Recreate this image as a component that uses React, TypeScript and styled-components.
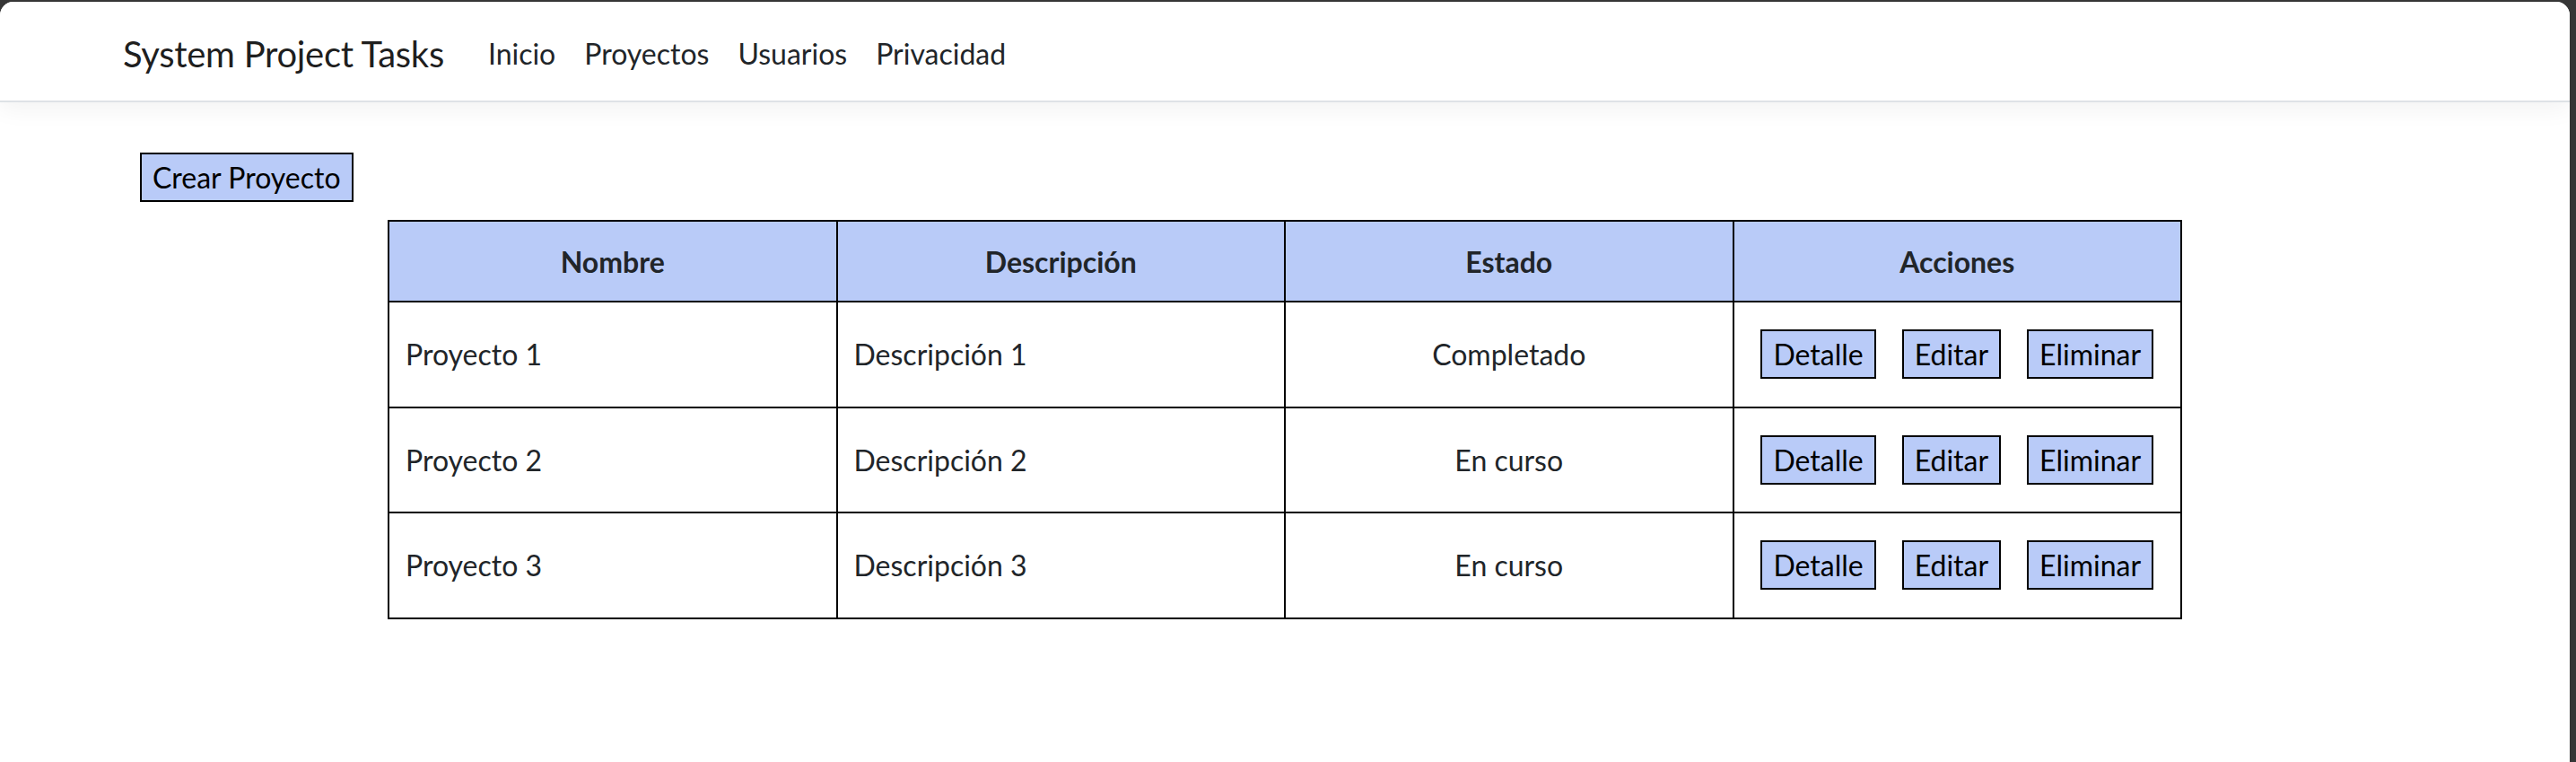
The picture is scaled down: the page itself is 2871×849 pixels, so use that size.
import React from "react";
import styled, { createGlobalStyle } from "styled-components";

const GlobalStyle = createGlobalStyle`
  * { box-sizing: border-box; }
  html, body {
    margin: 0;
    padding: 0;
    background: #363636;
  }
  body {
    font-family: Lato, "Open Sans", "Noto Sans", sans-serif;
    color: #212529;
  }
`;

const Frame = styled.div`
  min-height: 100vh;
  padding: 2px 7px 0 0;
  background: #363636;
  display: flex;
`;

const Window = styled.div`
  flex: 1;
  min-height: calc(100vh - 2px);
  background: #ffffff;
  border-radius: 15px 15px 0 0;
  overflow: hidden;
`;

const NavBar = styled.nav`
  height: 112px;
  padding: 6px 0 0 137px;
  display: flex;
  align-items: center;
  background: #ffffff;
  border-bottom: 2px solid #dee2e6;
  box-shadow: 0 8px 24px rgba(0, 0, 0, 0.05);
`;

const Brand = styled.a`
  font-size: 40px;
  line-height: 60px;
  letter-spacing: -0.3px;
  color: rgba(0, 0, 0, 0.9);
  text-decoration: none;
  margin-right: 33px;
`;

const NavList = styled.ul`
  display: flex;
  list-style: none;
  margin: 0;
  padding: 0;
`;

const NavLink = styled.a`
  display: block;
  padding: 0 16px;
  font-size: 32px;
  line-height: 48px;
  color: #212529;
  text-decoration: none;
`;

const Main = styled.main`
  padding-top: 56px;
`;

const Toolbar = styled.div`
  padding-left: 156px;
  display: flex;
`;

const Button = styled.button`
  font-family: inherit;
  font-size: 32px;
  line-height: 47px;
  padding: 2px 12px;
  color: #000000;
  background: #b9cbf8;
  border: 2px solid #000000;
  border-radius: 0;
  cursor: pointer;
`;

const Table = styled.table`
  width: 2000px;
  margin: 20px auto 0;
  border-collapse: collapse;
  table-layout: fixed;
`;

const HeadCell = styled.th`
  height: 90px;
  padding: 0 18px;
  background: #b9cbf8;
  border: 2px solid #000000;
  font-size: 32px;
  font-weight: 700;
  text-align: center;
  color: #212529;
`;

const Cell = styled.td<{ $align?: "left" | "center" }>`
  height: 117.6px;
  padding: 0 18px;
  border: 2px solid #000000;
  font-size: 32px;
  text-align: ${(p) => p.$align ?? "left"};
  color: #212529;
`;

const ActionGroup = styled.div`
  display: flex;
  justify-content: center;
  gap: 29px;
`;

type Project = { nombre: string; descripcion: string; estado: string };

const projects: Project[] = [
  { nombre: "Proyecto 1", descripcion: "Descripción 1", estado: "Completado" },
  { nombre: "Proyecto 2", descripcion: "Descripción 2", estado: "En curso" },
  { nombre: "Proyecto 3", descripcion: "Descripción 3", estado: "En curso" },
];

const links = ["Inicio", "Proyectos", "Usuarios", "Privacidad"];

export default function App() {
  return (
    <>
      <GlobalStyle />
      <Frame>
        <Window>
          <NavBar>
            <Brand href="#">System Project Tasks</Brand>
            <NavList>
              {links.map((l) => (
                <li key={l}>
                  <NavLink href="#">{l}</NavLink>
                </li>
              ))}
            </NavList>
          </NavBar>
          <Main>
            <Toolbar>
              <Button type="button">Crear Proyecto</Button>
            </Toolbar>
            <Table>
              <thead>
                <tr>
                  <HeadCell>Nombre</HeadCell>
                  <HeadCell>Descripción</HeadCell>
                  <HeadCell>Estado</HeadCell>
                  <HeadCell>Acciones</HeadCell>
                </tr>
              </thead>
              <tbody>
                {projects.map((p) => (
                  <tr key={p.nombre}>
                    <Cell>{p.nombre}</Cell>
                    <Cell>{p.descripcion}</Cell>
                    <Cell $align="center">{p.estado}</Cell>
                    <Cell $align="center">
                      <ActionGroup>
                        <Button type="button">Detalle</Button>
                        <Button type="button">Editar</Button>
                        <Button type="button">Eliminar</Button>
                      </ActionGroup>
                    </Cell>
                  </tr>
                ))}
              </tbody>
            </Table>
          </Main>
        </Window>
      </Frame>
    </>
  );
}
